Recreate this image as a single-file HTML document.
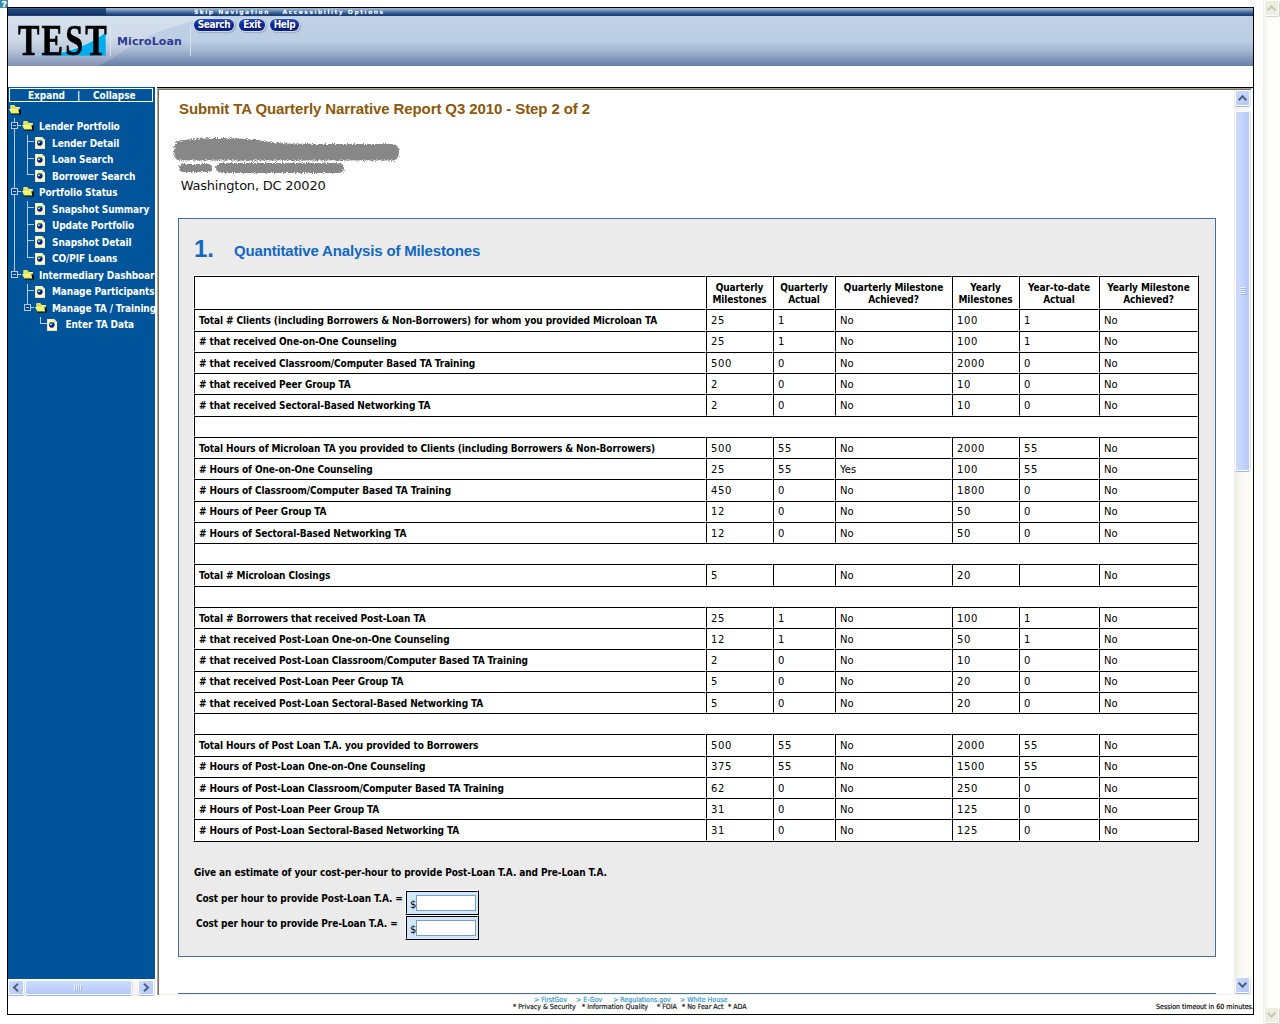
<!DOCTYPE html>
<html lang="en">
<head>
<meta charset="utf-8">
<title>MicroLoan - Submit TA Quarterly Narrative Report</title>
<style>
html,body{margin:0;padding:0;background:#fff}
body{position:relative;width:1280px;height:1024px;overflow:hidden;font-family:"DejaVu Sans Condensed","DejaVu Sans","Liberation Sans",sans-serif;font-size:10px;color:#000}
.a{position:absolute}
i{display:block;position:absolute;font-style:normal}
/* outer frame */
#outer{left:7px;top:7px;width:1245px;height:1006px;border:1px solid #000}
/* header */
#hdr{left:8px;top:8px;width:1245px;height:58px}
#nav{left:194px;top:8px;height:8px;font:bold 6px/8px "DejaVu Sans","Liberation Sans",sans-serif;color:#fff;letter-spacing:1.5px;white-space:nowrap}
.pill{position:absolute;top:19px;height:12px;border-radius:6px;background:linear-gradient(#2a4fc0 0%,#0a2a9c 45%,#06208a 100%);box-shadow:0 0 0 1px rgba(225,232,245,.75),1px 1px 1px 1px rgba(90,100,130,.35);color:#fff;font:bold 10px/12px "DejaVu Sans Condensed","DejaVu Sans",sans-serif;font-stretch:condensed;text-align:center;letter-spacing:-.4px;text-shadow:1px 1px 0 rgba(0,0,40,.6)}
#ml{left:117px;top:35px;font:bold 11px/14px "DejaVu Sans","Liberation Sans",sans-serif;color:#2f3a92;letter-spacing:.1px}
#logo{left:18px;top:15px;font:bold 45px/50px "Liberation Serif",serif;color:#000;transform-origin:0 0;transform:scaleX(.715);letter-spacing:3px;-webkit-text-stroke:.7px #000}
/* sidebar */
#side{left:8px;top:87px;width:147px;height:892px;background:#00549a;overflow:hidden}
#side .in{position:absolute;left:-8px;top:-87px;width:400px;height:1000px}
#ec{left:9px;top:88px;width:142px;height:12px;border:1px solid #fff;color:#fff;font:bold 10px/12px "DejaVu Sans Condensed","DejaVu Sans",sans-serif;font-stretch:condensed;letter-spacing:-.05px;white-space:nowrap}
.tl{position:absolute;color:#fff;font:bold 10px/16px "DejaVu Sans Condensed","DejaVu Sans",sans-serif;font-stretch:condensed;letter-spacing:-.1px;white-space:nowrap}
.ln{background:#b9c9df}
.bx{width:5px;height:5px;border:1px solid #b9c9df;background:#004a90}
.bx:after{content:"";position:absolute;left:1px;top:2px;width:3px;height:1px;background:#b9c9df}
.ic{position:absolute;display:block}
/* scrollbars (XP style) */
.trk{background:#f6f5ef}
.sb{position:absolute;border:1px solid #fff;border-radius:2px;box-shadow:0 1px 0 #9db4e6,1px 0 0 #d6e0f6;background:linear-gradient(135deg,#cbd9fc 0%,#c0d1fa 50%,#b2c6f6 100%)}
.sb svg{display:block}
.sbv{width:13px;height:14px}
.sbh{width:14px;height:13px}
.dis{position:absolute;width:13px;height:14px;border:1px solid #fff;border-radius:2px;background:#eeede1;box-shadow:1px 1px 0 #d6d4c5}
/* main frame */
#frame{left:157px;top:87px;width:1096px;height:908px;overflow:hidden}
#frame .in{position:absolute;left:-157px;top:-87px;width:1280px;height:1024px}
#title{left:179px;top:100px;font:bold 15px/18px "Liberation Sans",sans-serif;color:#8c580a;letter-spacing:-.1px;white-space:nowrap}
#addr{left:180.700px;top:178px;font:13px/16px "DejaVu Sans","Liberation Sans",sans-serif;color:#111;letter-spacing:-.22px;white-space:nowrap}
#box{left:178px;top:218px;width:1036px;height:737px;border:1px solid #456f9f;background:#ebebeb}
#box2{left:178px;top:993px;width:1036px;height:40px;border:1px solid #456f9f;background:#ebebeb}
#num{left:194px;top:236px;font:bold 24px/26px "Liberation Sans",sans-serif;color:#1068c0;white-space:nowrap}
#h2{left:234px;top:242px;font:bold 15px/18px "Liberation Sans",sans-serif;color:#1068c0;letter-spacing:-.17px;white-space:nowrap}
table.m{position:absolute;left:193px;top:275px;width:1006px;table-layout:fixed;border-collapse:separate;border-spacing:0;border:1px solid;border-color:#fff #000 #000 #fff;background:#fff;font:10px/12px "DejaVu Sans","Liberation Sans",sans-serif;letter-spacing:.6px}
table.m td,table.m th{border:1px solid;border-color:#000 #fff #fff #000;padding:5px 0 0 4px;vertical-align:top;text-align:left;overflow:hidden;white-space:nowrap;font-weight:normal}
table.m th{font:bold 10px/12px "DejaVu Sans Condensed","DejaVu Sans",sans-serif;font-stretch:condensed;letter-spacing:-.09px;text-align:center;padding:5px 0 0 0;white-space:normal}
table.m tr.u td{padding-top:4px}
table.m td.t{letter-spacing:0;padding-left:4px}
table.m td.lb{font:bold 10px/12px "DejaVu Sans Condensed","DejaVu Sans",sans-serif;font-stretch:condensed;letter-spacing:-.09px}
.bl{position:absolute;font:bold 10px/12px "DejaVu Sans Condensed","DejaVu Sans",sans-serif;font-stretch:condensed;letter-spacing:-.09px;white-space:nowrap}
table.c{position:absolute;border-collapse:separate;border-spacing:0;border:1px solid;border-color:#fff #000 #000 #fff;background:#cfe7ff}
table.c td{border:1px solid;border-color:#000 #cfe7ff #cfe7ff #000;padding:0;width:70px;height:21px;vertical-align:top;font:10px/12px "DejaVu Sans","Liberation Sans",sans-serif;position:relative}
table.c span{position:absolute;left:3px;top:7px}
table.c input{position:absolute;left:9px;top:3px;width:58px;height:14px;padding:0;margin:0;border:1px solid #7f9db9;background:#fff;display:block}
/* footer */
.ft{position:absolute;white-space:nowrap;-webkit-text-stroke:.2px;font:7px/8px "DejaVu Sans Condensed","DejaVu Sans","Liberation Sans",sans-serif;font-stretch:condensed}
</style>
</head>
<body>
<div class="a" style="left:0;top:0;width:8px;height:7.500px;background:#4189a5;color:#fff;font:bold 8.500px/8px 'Liberation Sans',sans-serif;text-align:center;overflow:hidden;-webkit-text-stroke:.4px #fff">?</div>

<div id="outer" class="a"></div>

<!-- header -->
<svg id="hdr" class="a" width="1245" height="58" viewBox="0 0 1245 58">
 <defs>
  <linearGradient id="gR" x1="0" y1="0" x2="0" y2="1"><stop offset="0" stop-color="#c1d1e4"/><stop offset=".5" stop-color="#bccee3"/><stop offset=".7" stop-color="#a3b5d1"/><stop offset=".855" stop-color="#8598bb"/><stop offset="1" stop-color="#667ea7"/></linearGradient>
  <linearGradient id="gL" x1="0" y1="0" x2="0" y2="1"><stop offset="0" stop-color="#d5e0ed"/><stop offset=".45" stop-color="#cfdae8"/><stop offset=".65" stop-color="#bcc8dc"/><stop offset=".85" stop-color="#9aa9c7"/><stop offset="1" stop-color="#8393b6"/></linearGradient>
  <linearGradient id="gD" x1="0" y1="0" x2="0" y2="1"><stop offset="0" stop-color="#4f76aa"/><stop offset=".14" stop-color="#20487d"/><stop offset=".7" stop-color="#183c6f"/><stop offset=".86" stop-color="#0d2c60"/><stop offset=".92" stop-color="#0d2c60"/><stop offset="1" stop-color="#7488ae"/></linearGradient>
  <linearGradient id="gD2" x1="0" y1="0" x2="0" y2="1"><stop offset="0" stop-color="#a3bedb"/><stop offset=".35" stop-color="#6a8cb6"/><stop offset=".72" stop-color="#2a5086"/><stop offset="1" stop-color="#1a3d70"/></linearGradient>
 </defs>
 <rect x="0" y="8" width="1245" height="50" fill="url(#gR)"/>
 <path d="M0 8H212C180 13 150 22 130 34C115 43 103 52 90 58H0z" fill="url(#gL)"/>
 <rect x="0" y="0" width="98" height="8" fill="url(#gD)"/>
 <rect x="98" y="0" width="1147" height="8" fill="url(#gD2)"/>
 <rect x="102" y="18" width="1" height="30" fill="#dfe7f1" opacity=".8"/>
 <rect x="182" y="18" width="1" height="30" fill="#dfe7f1" opacity=".8"/>
 <path d="M25 47.3C50 47 78 40 97.7 23.800V47.800H25z" fill="#00aeef"/><path d="M25 47.300C50 47 78 40 97.700 23.800" fill="none" stroke="#eef2f7" stroke-width=".7"/>
</svg>
<div id="logo" class="a">TEST</div>
<div id="ml" class="a">MicroLoan</div>
<div id="nav" class="a">Skip Navigation<span class="a" style="left:88.500px;top:0">Accessibility Options</span></div>
<div class="pill" style="left:194px;width:40px">Search</div>
<div class="pill" style="left:239px;width:26px">Exit</div>
<div class="pill" style="left:270px;width:29px">Help</div>

<!-- sidebar -->
<div id="side" class="a"><div class="in">
<div id="ec" class="a"><span class="a" style="left:18px;top:1px">Expand</span><span class="a" style="left:67px;top:1px">|</span><span class="a" style="left:83px;top:1px">Collapse</span></div>
<svg class="ic" style="left:9px;top:105px" width="13" height="10" viewBox="0 0 13 10"><path d="M9.2 1.6l1.8.9 1 6.1v.9H2.2v-.9h8z" fill="#000"/><path d="M1.2 .4h4.6l1 1.6h4v2.4H1.2z" fill="#e4e44a"/><path d="M1.6 .2h3.8v.8H1.6z" fill="#f6f68c"/><path d="M7 2h3.8v.8H7z" fill="#fbfbd0"/><path d="M.1 4.3h9l1.2 4H2.1z" fill="#f4f468"/><path d="M0 3.9h8.8l.3.9H.3z" fill="#f2f2f2"/><path d="M2 7.4h8l.3.9H2.2z" fill="#e6e650"/></svg>
<i class="ln" style="left:14px;top:118px;width:1px;height:4px"></i>
<i class="ln" style="left:14px;top:129px;width:1px;height:59px"></i>
<i class="ln" style="left:14px;top:195px;width:1px;height:75.5px"></i>
<i class="bx" style="left:11px;top:122px"></i>
<i class="ln" style="left:18px;top:125px;width:3px;height:1px"></i>
<svg class="ic" style="left:22px;top:121px" width="13" height="10" viewBox="0 0 13 10"><path d="M9.2 1.6l1.8.9 1 6.1v.9H2.2v-.9h8z" fill="#000"/><path d="M1.2 .4h4.6l1 1.6h4v2.4H1.2z" fill="#e4e44a"/><path d="M1.6 .2h3.8v.8H1.6z" fill="#f6f68c"/><path d="M7 2h3.8v.8H7z" fill="#fbfbd0"/><path d="M.1 4.3h9l1.2 4H2.1z" fill="#f4f468"/><path d="M0 3.9h8.8l.3.9H.3z" fill="#f2f2f2"/><path d="M2 7.4h8l.3.9H2.2z" fill="#e6e650"/></svg>
<span class="tl" style="left:39px;top:119px">Lender Portfolio</span>
<i class="ln" style="left:28px;top:141.3px;width:6px;height:1px"></i>
<svg class="ic" style="left:35px;top:137px" width="10" height="12" viewBox="0 0 10 12"><path d="M0 0h7l3 3v9H0z" fill="#ffffb4"/><path d="M0 0h.8v12H0zM0 11h10v1H0z" fill="#dedee0"/><path d="M0 0h7v.7H0z" fill="#ececd8"/><path d="M7 0l3 3H7z" fill="#e2e2d4"/><circle cx="4.8" cy="5.8" r="2.8" fill="#0808cc"/><path d="M2.3 4.6c.8-1.4 2.8-2 4.2-1.1.3.8-.5 1.3-1.200 1.600-.5.8-1.200 1.500-2.100 1.300-.6-.3-1-1-.9-1.800z" fill="#2f9a3c"/><circle cx="3.900" cy="5.500" r=".8" fill="#e8f4ff"/><path d="M2.600 7.500a2.800 2.800 0 0 0 4.400 0c-1 .9-3.200 1-4.400 0z" fill="#000"/></svg>
<span class="tl" style="left:52px;top:136px">Lender Detail</span>
<i class="ln" style="left:28px;top:157.8px;width:6px;height:1px"></i>
<svg class="ic" style="left:35px;top:153.5px" width="10" height="12" viewBox="0 0 10 12"><path d="M0 0h7l3 3v9H0z" fill="#ffffb4"/><path d="M0 0h.8v12H0zM0 11h10v1H0z" fill="#dedee0"/><path d="M0 0h7v.7H0z" fill="#ececd8"/><path d="M7 0l3 3H7z" fill="#e2e2d4"/><circle cx="4.8" cy="5.8" r="2.8" fill="#0808cc"/><path d="M2.3 4.6c.8-1.4 2.8-2 4.2-1.1.3.8-.5 1.3-1.200 1.600-.5.8-1.200 1.500-2.100 1.300-.6-.3-1-1-.9-1.800z" fill="#2f9a3c"/><circle cx="3.900" cy="5.500" r=".8" fill="#e8f4ff"/><path d="M2.600 7.500a2.800 2.800 0 0 0 4.400 0c-1 .9-3.200 1-4.400 0z" fill="#000"/></svg>
<span class="tl" style="left:52px;top:152px">Loan Search</span>
<i class="ln" style="left:28px;top:174.3px;width:6px;height:1px"></i>
<svg class="ic" style="left:35px;top:170px" width="10" height="12" viewBox="0 0 10 12"><path d="M0 0h7l3 3v9H0z" fill="#ffffb4"/><path d="M0 0h.8v12H0zM0 11h10v1H0z" fill="#dedee0"/><path d="M0 0h7v.7H0z" fill="#ececd8"/><path d="M7 0l3 3H7z" fill="#e2e2d4"/><circle cx="4.8" cy="5.8" r="2.8" fill="#0808cc"/><path d="M2.3 4.6c.8-1.4 2.8-2 4.2-1.1.3.8-.5 1.3-1.200 1.600-.5.8-1.200 1.500-2.100 1.300-.6-.3-1-1-.9-1.800z" fill="#2f9a3c"/><circle cx="3.900" cy="5.500" r=".8" fill="#e8f4ff"/><path d="M2.600 7.500a2.800 2.800 0 0 0 4.400 0c-1 .9-3.200 1-4.400 0z" fill="#000"/></svg>
<span class="tl" style="left:52px;top:169px">Borrower Search</span>
<i class="bx" style="left:11px;top:188px"></i>
<i class="ln" style="left:18px;top:191px;width:3px;height:1px"></i>
<svg class="ic" style="left:22px;top:187px" width="13" height="10" viewBox="0 0 13 10"><path d="M9.2 1.6l1.8.9 1 6.1v.9H2.2v-.9h8z" fill="#000"/><path d="M1.2 .4h4.6l1 1.6h4v2.4H1.2z" fill="#e4e44a"/><path d="M1.6 .2h3.8v.8H1.6z" fill="#f6f68c"/><path d="M7 2h3.8v.8H7z" fill="#fbfbd0"/><path d="M.1 4.3h9l1.2 4H2.1z" fill="#f4f468"/><path d="M0 3.9h8.8l.3.9H.3z" fill="#f2f2f2"/><path d="M2 7.4h8l.3.9H2.2z" fill="#e6e650"/></svg>
<span class="tl" style="left:39px;top:185px">Portfolio Status</span>
<i class="ln" style="left:28px;top:207.3px;width:6px;height:1px"></i>
<svg class="ic" style="left:35px;top:203px" width="10" height="12" viewBox="0 0 10 12"><path d="M0 0h7l3 3v9H0z" fill="#ffffb4"/><path d="M0 0h.8v12H0zM0 11h10v1H0z" fill="#dedee0"/><path d="M0 0h7v.7H0z" fill="#ececd8"/><path d="M7 0l3 3H7z" fill="#e2e2d4"/><circle cx="4.8" cy="5.8" r="2.8" fill="#0808cc"/><path d="M2.3 4.6c.8-1.4 2.8-2 4.2-1.1.3.8-.5 1.3-1.200 1.600-.5.8-1.200 1.500-2.100 1.300-.6-.3-1-1-.9-1.800z" fill="#2f9a3c"/><circle cx="3.900" cy="5.500" r=".8" fill="#e8f4ff"/><path d="M2.600 7.500a2.800 2.800 0 0 0 4.400 0c-1 .9-3.200 1-4.400 0z" fill="#000"/></svg>
<span class="tl" style="left:52px;top:202px">Snapshot Summary</span>
<i class="ln" style="left:28px;top:223.8px;width:6px;height:1px"></i>
<svg class="ic" style="left:35px;top:219.5px" width="10" height="12" viewBox="0 0 10 12"><path d="M0 0h7l3 3v9H0z" fill="#ffffb4"/><path d="M0 0h.8v12H0zM0 11h10v1H0z" fill="#dedee0"/><path d="M0 0h7v.7H0z" fill="#ececd8"/><path d="M7 0l3 3H7z" fill="#e2e2d4"/><circle cx="4.8" cy="5.8" r="2.8" fill="#0808cc"/><path d="M2.3 4.6c.8-1.4 2.8-2 4.2-1.1.3.8-.5 1.3-1.200 1.600-.5.8-1.200 1.500-2.100 1.300-.6-.3-1-1-.9-1.800z" fill="#2f9a3c"/><circle cx="3.900" cy="5.500" r=".8" fill="#e8f4ff"/><path d="M2.600 7.500a2.800 2.800 0 0 0 4.400 0c-1 .9-3.200 1-4.400 0z" fill="#000"/></svg>
<span class="tl" style="left:52px;top:218px">Update Portfolio</span>
<i class="ln" style="left:28px;top:240.3px;width:6px;height:1px"></i>
<svg class="ic" style="left:35px;top:236px" width="10" height="12" viewBox="0 0 10 12"><path d="M0 0h7l3 3v9H0z" fill="#ffffb4"/><path d="M0 0h.8v12H0zM0 11h10v1H0z" fill="#dedee0"/><path d="M0 0h7v.7H0z" fill="#ececd8"/><path d="M7 0l3 3H7z" fill="#e2e2d4"/><circle cx="4.8" cy="5.8" r="2.8" fill="#0808cc"/><path d="M2.3 4.6c.8-1.4 2.8-2 4.2-1.1.3.8-.5 1.3-1.200 1.600-.5.8-1.200 1.500-2.100 1.300-.6-.3-1-1-.9-1.800z" fill="#2f9a3c"/><circle cx="3.900" cy="5.500" r=".8" fill="#e8f4ff"/><path d="M2.600 7.500a2.800 2.800 0 0 0 4.400 0c-1 .9-3.200 1-4.400 0z" fill="#000"/></svg>
<span class="tl" style="left:52px;top:235px">Snapshot Detail</span>
<i class="ln" style="left:28px;top:256.8px;width:6px;height:1px"></i>
<svg class="ic" style="left:35px;top:252.5px" width="10" height="12" viewBox="0 0 10 12"><path d="M0 0h7l3 3v9H0z" fill="#ffffb4"/><path d="M0 0h.8v12H0zM0 11h10v1H0z" fill="#dedee0"/><path d="M0 0h7v.7H0z" fill="#ececd8"/><path d="M7 0l3 3H7z" fill="#e2e2d4"/><circle cx="4.8" cy="5.8" r="2.8" fill="#0808cc"/><path d="M2.3 4.6c.8-1.4 2.8-2 4.2-1.1.3.8-.5 1.3-1.200 1.600-.5.8-1.200 1.500-2.100 1.300-.6-.3-1-1-.9-1.800z" fill="#2f9a3c"/><circle cx="3.900" cy="5.500" r=".8" fill="#e8f4ff"/><path d="M2.600 7.500a2.800 2.800 0 0 0 4.400 0c-1 .9-3.200 1-4.400 0z" fill="#000"/></svg>
<span class="tl" style="left:52px;top:251px">CO/PIF Loans</span>
<i class="bx" style="left:11px;top:270.5px"></i>
<i class="ln" style="left:18px;top:273.5px;width:3px;height:1px"></i>
<svg class="ic" style="left:22px;top:269.5px" width="13" height="10" viewBox="0 0 13 10"><path d="M9.2 1.6l1.8.9 1 6.1v.9H2.2v-.9h8z" fill="#000"/><path d="M1.2 .4h4.6l1 1.6h4v2.4H1.2z" fill="#e4e44a"/><path d="M1.6 .2h3.8v.8H1.6z" fill="#f6f68c"/><path d="M7 2h3.8v.8H7z" fill="#fbfbd0"/><path d="M.1 4.3h9l1.2 4H2.1z" fill="#f4f468"/><path d="M0 3.9h8.8l.3.9H.3z" fill="#f2f2f2"/><path d="M2 7.4h8l.3.9H2.2z" fill="#e6e650"/></svg>
<span class="tl" style="left:39px;top:268px">Intermediary Dashboard</span>
<i class="ln" style="left:28px;top:289.8px;width:6px;height:1px"></i>
<svg class="ic" style="left:35px;top:285.5px" width="10" height="12" viewBox="0 0 10 12"><path d="M0 0h7l3 3v9H0z" fill="#ffffb4"/><path d="M0 0h.8v12H0zM0 11h10v1H0z" fill="#dedee0"/><path d="M0 0h7v.7H0z" fill="#ececd8"/><path d="M7 0l3 3H7z" fill="#e2e2d4"/><circle cx="4.8" cy="5.8" r="2.8" fill="#0808cc"/><path d="M2.3 4.6c.8-1.4 2.8-2 4.2-1.1.3.8-.5 1.3-1.200 1.600-.5.8-1.200 1.500-2.100 1.300-.6-.3-1-1-.9-1.800z" fill="#2f9a3c"/><circle cx="3.900" cy="5.500" r=".8" fill="#e8f4ff"/><path d="M2.600 7.500a2.800 2.800 0 0 0 4.400 0c-1 .9-3.200 1-4.400 0z" fill="#000"/></svg>
<span class="tl" style="left:52px;top:284px">Manage Participants</span>
<i class="bx" style="left:24px;top:303.5px"></i>
<i class="ln" style="left:31px;top:306.5px;width:3px;height:1px"></i>
<svg class="ic" style="left:35px;top:302.5px" width="13" height="10" viewBox="0 0 13 10"><path d="M9.2 1.6l1.8.9 1 6.1v.9H2.2v-.9h8z" fill="#000"/><path d="M1.2 .4h4.6l1 1.6h4v2.4H1.2z" fill="#e4e44a"/><path d="M1.6 .2h3.8v.8H1.6z" fill="#f6f68c"/><path d="M7 2h3.8v.8H7z" fill="#fbfbd0"/><path d="M.1 4.3h9l1.2 4H2.1z" fill="#f4f468"/><path d="M0 3.9h8.8l.3.9H.3z" fill="#f2f2f2"/><path d="M2 7.4h8l.3.9H2.2z" fill="#e6e650"/></svg>
<span class="tl" style="left:52px;top:301px">Manage TA / Training</span>
<i class="ln" style="left:41px;top:322.8px;width:6px;height:1px"></i>
<svg class="ic" style="left:47px;top:318.5px" width="10" height="12" viewBox="0 0 10 12"><path d="M0 0h7l3 3v9H0z" fill="#ffffb4"/><path d="M0 0h.8v12H0zM0 11h10v1H0z" fill="#dedee0"/><path d="M0 0h7v.7H0z" fill="#ececd8"/><path d="M7 0l3 3H7z" fill="#e2e2d4"/><circle cx="4.8" cy="5.8" r="2.8" fill="#0808cc"/><path d="M2.3 4.6c.8-1.4 2.8-2 4.2-1.1.3.8-.5 1.3-1.200 1.600-.5.8-1.200 1.500-2.100 1.300-.6-.3-1-1-.9-1.800z" fill="#2f9a3c"/><circle cx="3.900" cy="5.500" r=".8" fill="#e8f4ff"/><path d="M2.600 7.500a2.800 2.800 0 0 0 4.400 0c-1 .9-3.200 1-4.400 0z" fill="#000"/></svg>
<span class="tl" style="left:65.5px;top:317px">Enter TA Data</span>
<i class="ln" style="left:27px;top:135px;width:1px;height:40.3px"></i>
<i class="ln" style="left:27px;top:201px;width:1px;height:56.8px"></i>
<i class="ln" style="left:27px;top:283.5px;width:1px;height:20px"></i>
<i class="ln" style="left:40px;top:316.5px;width:1px;height:7.3px"></i>
</div></div>
<!-- sidebar horizontal scrollbar -->
<div class="a trk" style="left:8px;top:979px;width:147px;height:17px;background:linear-gradient(#fdfcf7,#f3f1e8)">
 <i style="left:16px;top:1px;width:1px;height:15px;background:#ebe8d9"></i>
 <div class="sb sbh" style="left:0;top:1px"><svg width="14" height="13" viewBox="0 0 14 13"><path d="M9 2.700L5 6.500l4 3.800" fill="none" stroke="#4d6185" stroke-width="2"/></svg></div>
 <div class="sb" style="left:17px;top:1px;width:105px;height:13px;background:linear-gradient(#cddafc,#c3d3fa 50%,#b4c8f7)"><svg width="105" height="13" viewBox="0 0 105 13"><path d="M48.500 3.500v6M50.500 3.500v6M52.500 3.500v6M54.500 3.500v6" stroke="#eef3ff" stroke-width="1"/><path d="M49.500 4.500v6M51.500 4.500v6M53.500 4.500v6M55.500 4.500v6" stroke="#8ea6de" stroke-width="1" opacity=".6"/></svg></div>
 <div class="sb sbh" style="left:130px;top:1px"><svg width="14" height="13" viewBox="0 0 14 13"><path d="M5 2.700l4 3.800-4 3.800" fill="none" stroke="#4d6185" stroke-width="2"/></svg></div>
</div>

<!-- main content frame -->
<div class="a" style="left:157px;top:87px;width:1096px;height:1px;background:#000"></div>
<div class="a" style="left:157px;top:88px;width:1095px;height:1px;background:#aca899"></div>
<div class="a" style="left:158px;top:89px;width:1093px;height:1px;background:#716f64"></div>
<div class="a" style="left:157px;top:88px;width:1px;height:907px;background:#aca899"></div>
<div class="a" style="left:158px;top:89px;width:1px;height:906px;background:#716f64"></div>
<div id="frame" class="a" style="left:159px;top:90px;width:1075px;height:904px"><div class="in" style="left:-159px;top:-90px">
 <div id="title" class="a">Submit TA Quarterly Narrative Report Q3 2010 - Step 2 of 2</div>
 <svg class="a" style="left:170px;top:134px" width="240" height="46" viewBox="0 0 240 46">
  <defs><filter id="rg" x="-5%" y="-20%" width="110%" height="140%"><feTurbulence type="fractalNoise" baseFrequency=".9" numOctaves="2" seed="3"/><feDisplacementMap in="SourceGraphic" scale="5"/></filter></defs>
  <g fill="#878787" filter="url(#rg)">
   <path d="M8 7C30 3 70 3 100 8C110 10 130 10 222 10Q229 10 229 18Q229 26.500 222 26.500L10 26.500Q4 26.500 4 18Q4 9 8 7z"/>
   <rect x="9" y="30" width="33" height="8" rx="4"/>
   <rect x="46" y="29" width="128" height="10" rx="5"/>
  </g>
 </svg>
 <div id="addr" class="a">Washington, DC 20020</div>
 <div id="box" class="a"></div>
 <div id="box2" class="a"></div>
 <div id="num" class="a">1.</div>
 <div id="h2" class="a">Quantitative Analysis of Milestones</div>
 <table class="m">
  <colgroup><col style="width:512px"><col style="width:67px"><col style="width:62px"><col style="width:117px"><col style="width:67px"><col style="width:80px"><col style="width:99px"></colgroup>
  <tr style="height:33px"><th>&nbsp;</th><th>Quarterly<br>Milestones</th><th>Quarterly<br>Actual</th><th>Quarterly Milestone<br>Achieved?</th><th>Yearly<br>Milestones</th><th>Year-to-date<br>Actual</th><th>Yearly Milestone<br>Achieved?</th></tr>
<tr style="height:22px"><td class="lb">Total # Clients (including Borrowers &amp; Non-Borrowers) for whom you provided Microloan TA</td><td>25</td><td>1</td><td class=t>No</td><td>100</td><td>1</td><td class=t>No</td></tr>
<tr class="u" style="height:21px"><td class="lb"># that received One-on-One Counseling</td><td>25</td><td>1</td><td class=t>No</td><td>100</td><td>1</td><td class=t>No</td></tr>
<tr style="height:21px"><td class="lb"># that received Classroom/Computer Based TA Training</td><td>500</td><td>0</td><td class=t>No</td><td>2000</td><td>0</td><td class=t>No</td></tr>
<tr style="height:21px"><td class="lb"># that received Peer Group TA</td><td>2</td><td>0</td><td class=t>No</td><td>10</td><td>0</td><td class=t>No</td></tr>
<tr style="height:22px"><td class="lb"># that received Sectoral-Based Networking TA</td><td>2</td><td>0</td><td class=t>No</td><td>10</td><td>0</td><td class=t>No</td></tr>
<tr style="height:21px"><td colspan="7">&nbsp;</td></tr>
<tr style="height:21px"><td class="lb">Total Hours of Microloan TA you provided to Clients (including Borrowers &amp; Non-Borrowers)</td><td>500</td><td>55</td><td class=t>No</td><td>2000</td><td>55</td><td class=t>No</td></tr>
<tr style="height:21px"><td class="lb"># Hours of One-on-One Counseling</td><td>25</td><td>55</td><td class=t>Yes</td><td>100</td><td>55</td><td class=t>No</td></tr>
<tr style="height:22px"><td class="lb"># Hours of Classroom/Computer Based TA Training</td><td>450</td><td>0</td><td class=t>No</td><td>1800</td><td>0</td><td class=t>No</td></tr>
<tr class="u" style="height:21px"><td class="lb"># Hours of Peer Group TA</td><td>12</td><td>0</td><td class=t>No</td><td>50</td><td>0</td><td class=t>No</td></tr>
<tr style="height:21px"><td class="lb"># Hours of Sectoral-Based Networking TA</td><td>12</td><td>0</td><td class=t>No</td><td>50</td><td>0</td><td class=t>No</td></tr>
<tr style="height:21px"><td colspan="7">&nbsp;</td></tr>
<tr style="height:22px"><td class="lb">Total # Microloan Closings</td><td>5</td><td>&nbsp;</td><td class=t>No</td><td>20</td><td>&nbsp;</td><td class=t>No</td></tr>
<tr style="height:21px"><td colspan="7">&nbsp;</td></tr>
<tr style="height:21px"><td class="lb">Total # Borrowers that received Post-Loan TA</td><td>25</td><td>1</td><td class=t>No</td><td>100</td><td>1</td><td class=t>No</td></tr>
<tr style="height:21px"><td class="lb"># that received Post-Loan One-on-One Counseling</td><td>12</td><td>1</td><td class=t>No</td><td>50</td><td>1</td><td class=t>No</td></tr>
<tr style="height:22px"><td class="lb"># that received Post-Loan Classroom/Computer Based TA Training</td><td>2</td><td>0</td><td class=t>No</td><td>10</td><td>0</td><td class=t>No</td></tr>
<tr class="u" style="height:21px"><td class="lb"># that received Post-Loan Peer Group TA</td><td>5</td><td>0</td><td class=t>No</td><td>20</td><td>0</td><td class=t>No</td></tr>
<tr style="height:21px"><td class="lb"># that received Post-Loan Sectoral-Based Networking TA</td><td>5</td><td>0</td><td class=t>No</td><td>20</td><td>0</td><td class=t>No</td></tr>
<tr style="height:21px"><td colspan="7">&nbsp;</td></tr>
<tr style="height:22px"><td class="lb">Total Hours of Post Loan T.A. you provided to Borrowers</td><td>500</td><td>55</td><td class=t>No</td><td>2000</td><td>55</td><td class=t>No</td></tr>
<tr class="u" style="height:21px"><td class="lb"># Hours of Post-Loan One-on-One Counseling</td><td>375</td><td>55</td><td class=t>No</td><td>1500</td><td>55</td><td class=t>No</td></tr>
<tr style="height:21px"><td class="lb"># Hours of Post-Loan Classroom/Computer Based TA Training</td><td>62</td><td>0</td><td class=t>No</td><td>250</td><td>0</td><td class=t>No</td></tr>
<tr style="height:21px"><td class="lb"># Hours of Post-Loan Peer Group TA</td><td>31</td><td>0</td><td class=t>No</td><td>125</td><td>0</td><td class=t>No</td></tr>
<tr style="height:22px"><td class="lb"># Hours of Post-Loan Sectoral-Based Networking TA</td><td>31</td><td>0</td><td class=t>No</td><td>125</td><td>0</td><td class=t>No</td></tr>
 </table>
 <div class="bl" style="left:194px;top:867px">Give an estimate of your cost-per-hour to provide Post-Loan T.A. and Pre-Loan T.A.</div>
 <div class="bl" style="left:196px;top:893px">Cost per hour to provide Post-Loan T.A. =</div>
 <div class="bl" style="left:196px;top:918px">Cost per hour to provide Pre-Loan T.A. =</div>
 <table class="c" style="left:405px;top:890px"><tr><td><span>$</span><input type="text"></td></tr></table>
 <table class="c" style="left:405px;top:915px"><tr><td><span>$</span><input type="text"></td></tr></table>
</div></div>
<!-- inner vertical scrollbar -->
<div class="a trk" style="left:1234px;top:90px;width:17px;height:904px;background:linear-gradient(90deg,#efede5,#f9f8f2 40%,#fdfcf8)">
 <div class="sb sbv" style="left:1px;top:0"><svg width="13" height="14" viewBox="0 0 13 14"><path d="M2.700 9.200l3.800-4 3.800 4" fill="none" stroke="#4d6185" stroke-width="2"/></svg></div>
 <div class="sb" style="left:1px;top:21px;width:13px;height:358px;background:linear-gradient(90deg,#cddafc,#c3d3fa 50%,#b4c8f7)"><svg width="13" height="358" viewBox="0 0 13 358"><path d="M3.500 175.500h6M3.500 177.500h6M3.500 179.500h6M3.500 181.500h6" stroke="#eef3ff" stroke-width="1"/><path d="M4.500 176.500h6M4.500 178.500h6M4.500 180.500h6M4.500 182.500h6" stroke="#8ea6de" stroke-width="1" opacity=".6"/></svg></div>
 <div class="sb sbv" style="left:1px;top:887px"><svg width="13" height="14" viewBox="0 0 13 14"><path d="M2.700 4.800l3.800 4 3.800-4" fill="none" stroke="#4d6185" stroke-width="2"/></svg></div>
</div>
<div class="a" style="left:159px;top:994px;width:1093px;height:1px;background:#f1efe2"></div>
<div class="a" style="left:1251px;top:90px;width:2px;height:905px;background:#fbfaf5"></div>

<!-- footer -->
<div class="ft" style="left:534px;top:996px;color:#3a9ad0">&gt; FirstGov</div>
<div class="ft" style="left:576px;top:996px;color:#3a9ad0">&gt; E-Gov</div>
<div class="ft" style="left:613px;top:996px;color:#3a9ad0">&gt; Regulations.gov</div>
<div class="ft" style="left:680px;top:996px;color:#3a9ad0">&gt; White House</div>
<div class="ft" style="left:513px;top:1003px;color:#222">* Privacy &amp; Security</div>
<div class="ft" style="left:582px;top:1003px;color:#222">* Information Quality</div>
<div class="ft" style="left:657px;top:1003px;color:#222">* FOIA</div>
<div class="ft" style="left:682px;top:1003px;color:#222">* No Fear Act</div>
<div class="ft" style="left:728px;top:1003px;color:#222">* ADA</div>
<div class="ft" style="left:1156px;top:1003px;color:#111">Session timeout in 60 minutes.</div>

<!-- outer (disabled) scrollbar -->
<div class="a" style="left:1263px;top:0;width:17px;height:1024px;background:linear-gradient(90deg,#eeede5 0,#f6f5ef 2px,#fefefb 6px,#fefefb 100%)">
 <div class="dis" style="left:1px;top:0"><svg width="13" height="14" viewBox="0 0 13 14" style="display:block"><path d="M2.700 9.200l3.800-4 3.800 4" fill="none" stroke="#c9c7ba" stroke-width="2"/></svg></div>
 <div class="dis" style="left:1px;top:1007px"><svg width="13" height="14" viewBox="0 0 13 14" style="display:block"><path d="M2.700 4.800l3.800 4 3.800-4" fill="none" stroke="#c9c7ba" stroke-width="2"/></svg></div>
</div>
</body>
</html>
